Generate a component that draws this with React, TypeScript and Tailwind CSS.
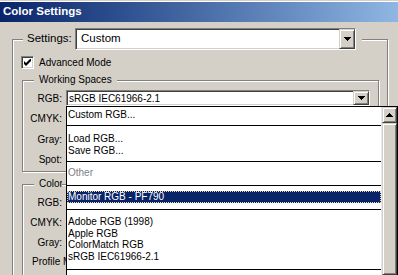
const sunken =
  'border border-t-[#808080] border-l-[#808080] border-b-white border-r-white shadow-[inset_1px_1px_0_#404040,inset_-1px_-1px_0_#d4d0c8]'
const raised =
  'bg-[#d4d0c8] border border-t-[#d4d0c8] border-l-[#d4d0c8] border-b-[#404040] border-r-[#404040] shadow-[inset_1px_1px_0_#fff,inset_-1px_-1px_0_#808080]'
const etched = 'border border-[#808080] shadow-[inset_1px_1px_0_#fff,1px_1px_0_#fff]'

function Arrow({ up = false }: { up?: boolean }) {
  return (
    <svg width="7" height="4" viewBox="0 0 7 4" shapeRendering="crispEdges" className={up ? 'rotate-180' : ''}>
      <rect x="0" y="0" width="7" height="1" fill="#000" />
      <rect x="1" y="1" width="5" height="1" fill="#000" />
      <rect x="2" y="2" width="3" height="1" fill="#000" />
      <rect x="3" y="3" width="1" height="1" fill="#000" />
    </svg>
  )
}

function Combo({ value, w, h, big = false }: { value: string; w: string; h: string; big?: boolean }) {
  return (
    <div className={`${w} ${h} bg-white flex items-stretch ${sunken}`}>
      <div className={`flex-1 flex items-center whitespace-nowrap ${big ? 'pl-[5px] text-[11.5px]' : 'pl-[2px] text-[10px]'}`}>
        {value}
      </div>
      <div className={`w-[16px] flex items-center justify-center ${raised}`}>
        <Arrow />
      </div>
    </div>
  )
}

function Row({ label, mt, value = '' }: { label: string; mt: string; value?: string }) {
  return (
    <div className={`flex items-center h-[16px] ${mt}`}>
      <span className="w-[39px] text-right text-[10px]">{label}</span>
      <div className="ml-[4px]">
        <Combo value={value} w="w-[304px]" h="h-[16px]" />
      </div>
    </div>
  )
}

const Line = ({ mt }: { mt: string }) => <div className={`h-px bg-black ${mt}`} />

export default function App() {
  return (
    <div
      className="relative w-[398px] h-[275px] overflow-hidden bg-[#d4d0c8] text-black"
      style={{ fontFamily: '"Liberation Sans", Arial, sans-serif' }}
    >
      <div className="h-[2px] border-t border-[#d4d0c8] bg-white" />
      <div className="h-[20px] flex items-center pl-[3px] bg-gradient-to-r from-[#0a246a] to-[#90b6e3] text-white font-bold text-[11.5px]">
        Color Settings
      </div>

      <fieldset className={`ml-[12px] mt-[6px] w-[376px] ${etched}`}>
        <legend className="ml-[10px] pl-[4px] pr-[6px] bg-[#d4d0c8]">
          <div className="flex items-center">
            <span className="w-[48px] text-[11.5px]">Settings:</span>
            <Combo value="Custom" w="w-[281px]" h="h-[22px]" big />
          </div>
        </legend>

        <div className="pl-[8px] mt-[6px] flex items-center h-[13px]">
          <div className={`w-[13px] h-[13px] bg-white flex items-center justify-center ${sunken}`}>
            <svg width="7" height="7" viewBox="0 0 7 7">
              <path d="M0 2L2 4L7 -1L7 2L2 7L0 5Z" fill="#000" />
            </svg>
          </div>
          <span className="ml-[5px] text-[10px]">Advanced Mode</span>
        </div>

        <fieldset className={`ml-[9px] mt-[5px] w-[357px] pb-[4px] ${etched}`}>
          <legend className="ml-[11px] px-[5px] bg-[#d4d0c8] text-[10px] leading-[12px]">Working Spaces</legend>
          <Row label="RGB:" mt="mt-[4px]" value="sRGB IEC61966-2.1" />
          <Row label="CMYK:" mt="mt-[4px]" />
          <Row label="Gray:" mt="mt-[5px]" />
          <Row label="Spot:" mt="mt-[4px]" />
        </fieldset>

        <fieldset className={`ml-[9px] mt-[6px] w-[357px] pb-[10px] ${etched}`}>
          <legend className="ml-[11px] px-[5px] bg-[#d4d0c8] text-[10px] leading-[12px] whitespace-nowrap max-w-[28px] overflow-hidden">
            Color Management Policies
          </legend>
          <Row label="RGB:" mt="mt-[4px]" />
          <Row label="CMYK:" mt="mt-[4px]" />
          <Row label="Gray:" mt="mt-[4px]" />
          <div className="mt-[3px] h-[16px] flex items-center ml-[9px] w-[34px] overflow-hidden text-[10px] whitespace-nowrap">
            Profile Mismatches:
          </div>
        </fieldset>
      </fieldset>

      {/* open RGB list */}
      <div className="absolute left-[66px] top-[106px] w-[332px] h-[169px] bg-white border-l border-t border-black flex">
        <div className="flex-1 flex flex-col text-[10px] leading-[12px]">
          <div className="mt-[2px] h-[12px] pl-[1px]">Custom RGB...</div>
          <Line mt="mt-[4px]" />
          <div className="mt-[7px] h-[12px] pl-[1px]">Load RGB...</div>
          <div className="h-[12px] pl-[1px]">Save RGB...</div>
          <Line mt="mt-[4px]" />
          <div className="mt-[5px] h-[12px] pl-[1px] text-[#808080]">Other</div>
          <Line mt="mt-[6px]" />
          <div className="mt-[5px] h-[12px] bg-[#0a246a] text-white border border-dotted border-[#e6dca0] leading-[10px]">
            Monitor RGB - PF790
          </div>
          <Line mt="mt-[6px]" />
          <div className="mt-[6px] h-[12px] pl-[1px]">Adobe RGB (1998)</div>
          <div className="h-[11px] pl-[1px] leading-[11px]">Apple RGB</div>
          <div className="h-[12px] pl-[1px]">ColorMatch RGB</div>
          <div className="h-[11px] pl-[1px] leading-[11px]">sRGB IEC61966-2.1</div>
          <Line mt="mt-[7px]" />
        </div>
        <div className="w-[17px] flex flex-col border-l border-[#e8e8e8] border-r border-r-black">
          <div className={`h-[16px] flex items-center justify-center ${raised}`}>
            <Arrow up />
          </div>
          <div className={`flex-1 ${raised}`} />
        </div>
      </div>
    </div>
  )
}
